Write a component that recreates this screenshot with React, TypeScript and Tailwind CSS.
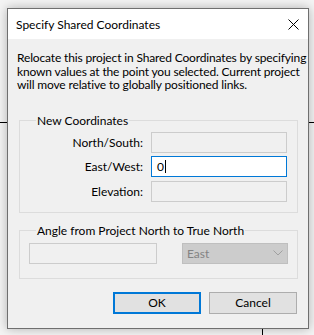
import React from 'react';

const font = { fontFamily: 'Lato, "Noto Sans", "Liberation Sans", sans-serif' };

const Field = ({ label, value, active }: { label: string; value?: string; active?: boolean }) => (
  <div className="flex items-center h-[21px]">
    <div className="w-[122px] text-right pr-[8px] leading-[13px]">{label}</div>
    {active ? (
      <div className="w-[136px] h-[21px] border border-[#0078d7] bg-white flex items-center pl-[5px]">
        <span className="leading-[13px]">{value}</span>
        <span className="w-px h-[13px] bg-black ml-[1px]" />
      </div>
    ) : (
      <div className="w-[136px] h-[21px] border border-[#cccccc] bg-[#f0f0f0]" />
    )}
  </div>
);

export default function App() {
  return (
    <div className="relative w-[314px] h-[335px] bg-[#f4f4f4] overflow-hidden text-[12px] text-black" style={font}>
      {/* drawing behind the dialog */}
      <svg className="absolute inset-0" width="314" height="335">
        <line x1="0" y1="122.5" x2="314" y2="122.5" stroke="#000" strokeWidth="1" />
        <line x1="262.5" y1="300" x2="262.5" y2="335" stroke="#000" strokeWidth="1" />
      </svg>
      <div className="absolute left-[7px] top-[8px] w-[302px] h-[321px] border border-[#6f6f6f] bg-[#f0f0f0] shadow-[0_0_10px_rgba(0,0,0,0.28)] flex flex-col">
        <div className="h-[30px] bg-white flex items-center justify-between pl-[8px] pr-[9px] shrink-0">
          <span className="leading-[13px]">Specify Shared Coordinates</span>
          <svg width="11" height="11" viewBox="0 0 11 11">
            <path d="M0.5 0.5 L10.5 10.5 M10.5 0.5 L0.5 10.5" stroke="#000" strokeWidth="1" fill="none" />
          </svg>
        </div>
        <div className="flex flex-col px-[11px] pt-[12px]">
          <p className="-ml-[2px] leading-[13.5px] tracking-[-0.15px]">
            <span className="block whitespace-nowrap">Relocate this project in Shared Coordinates by specifying</span>
            <span className="block whitespace-nowrap">known values at the point you selected. Current project</span>
            <span className="block whitespace-nowrap">will move relative to globally positioned links.</span>
          </p>

          <fieldset className="mt-[22px] border border-[#dcdcdc] w-[279px] px-[9px] pb-[10px]">
            <legend className="ml-[7px] px-[1px] leading-[14px]">New Coordinates</legend>
            <div className="flex flex-col gap-[3.5px] mt-[4px]">
              <Field label="North/South:" />
              <Field label="East/West:" value="0" active />
              <Field label="Elevation:" />
            </div>
          </fieldset>

          <fieldset className="mt-[11px] border border-[#dcdcdc] w-[279px] px-[9px] pb-[14px]">
            <legend className="ml-[7px] px-[1px] leading-[14px]">Angle from Project North to True North</legend>
            <div className="flex items-center justify-between mt-[5px]">
              <div className="w-[128px] h-[21px] border border-[#cccccc] bg-[#f0f0f0]" />
              <div className="w-[106px] h-[21px] border border-[#bfbfbf] bg-[#cccccc] flex items-center justify-between pl-[4px] pr-[4px] text-[#838383]">
                <span className="leading-[13px]">East</span>
                <svg width="10" height="6" viewBox="0 0 10 6">
                  <path d="M0.5 0.5 L5 5 L9.5 0.5" stroke="#a0a0a0" strokeWidth="1" fill="none" />
                </svg>
              </div>
            </div>
          </fieldset>

          <div className="flex justify-end gap-[8px] mt-[13px]">
            <button className="w-[88px] h-[22px] border-2 border-[#0078d7] bg-[#e1e1e1] leading-[13px]">OK</button>
            <button className="w-[88px] h-[22px] border border-[#adadad] bg-[#e1e1e1] leading-[13px]">Cancel</button>
          </div>
        </div>
      </div>
    </div>
  );
}
